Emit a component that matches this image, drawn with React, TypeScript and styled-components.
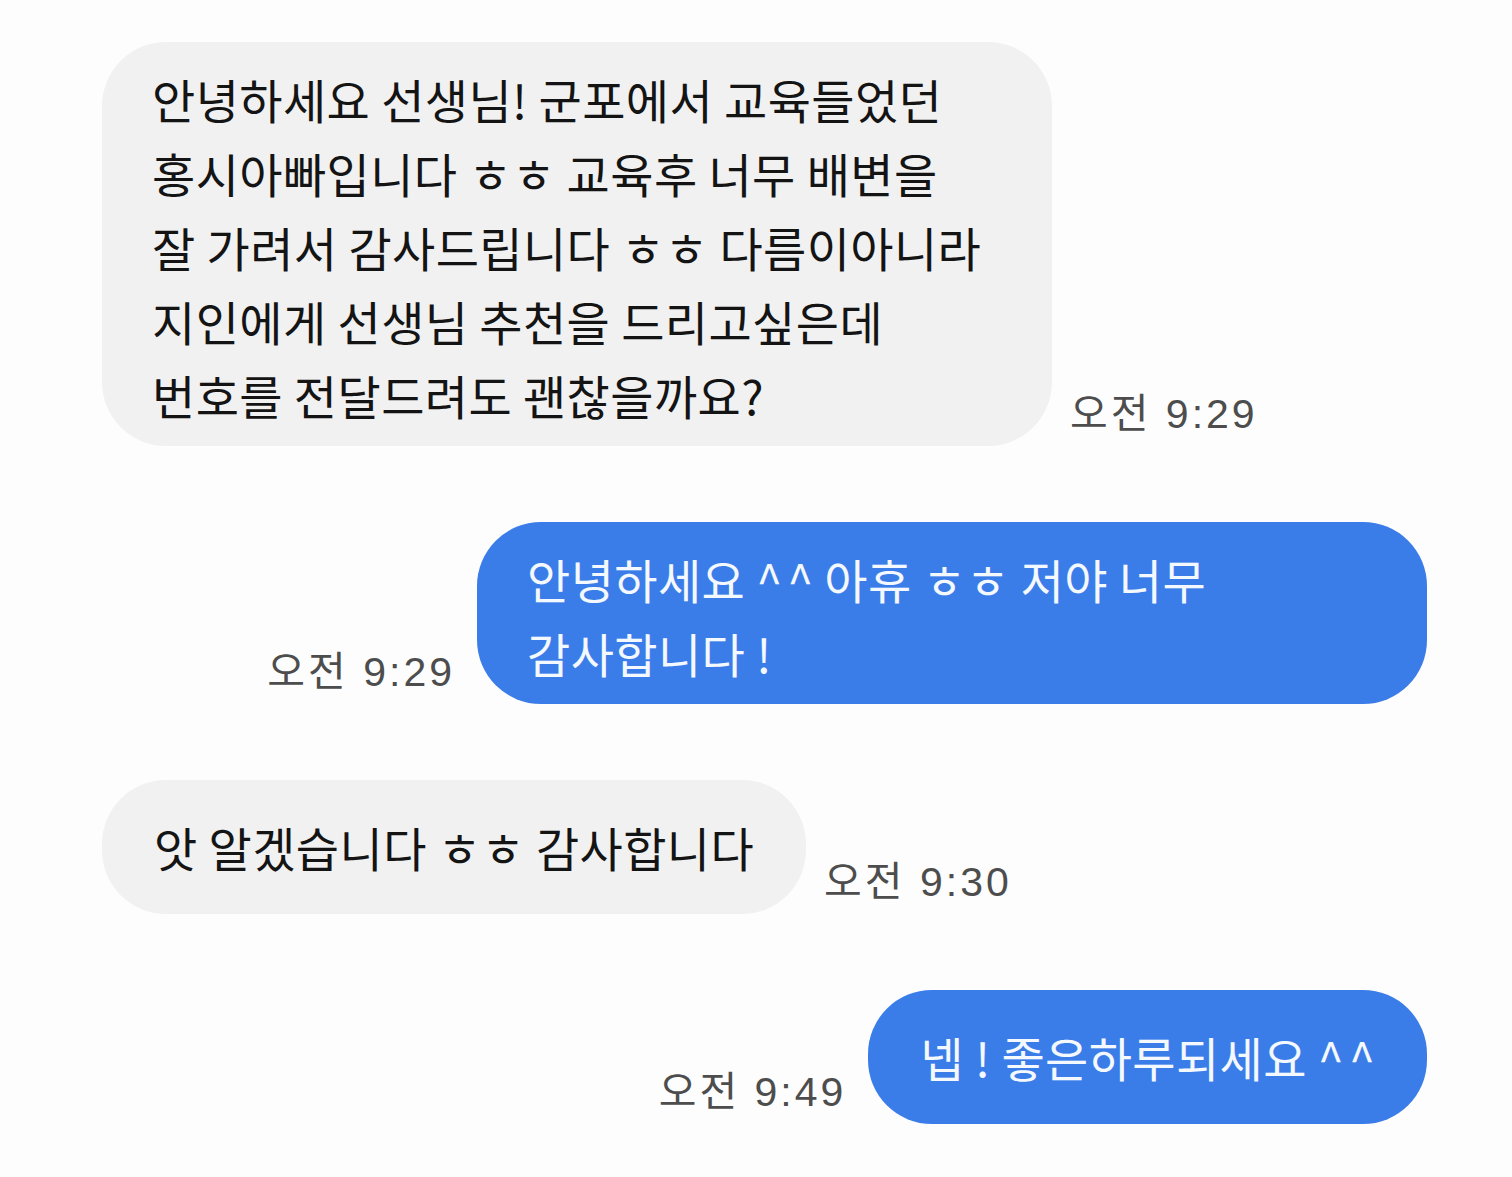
import { createGlobalStyle } from "styled-components";
import styled from "styled-components";

const GlobalStyle = createGlobalStyle`
  html, body {
    margin: 0;
    padding: 0;
    background: #fdfdfd;
  }
  body {
    font-family: "Noto Sans CJK KR", "Noto Sans", sans-serif;
  }
`;

const Page = styled.div`
  width: 1512px;
  height: 1177px;
  box-sizing: border-box;
  padding: 42px 85px 0 102px;
  display: flex;
  flex-direction: column;
  gap: 76px;
  background: #fdfdfd;
  overflow: hidden;
`;

const Row = styled.div<{ $out?: boolean }>`
  display: flex;
  align-items: flex-end;
  justify-content: ${(p) => (p.$out ? "flex-end" : "flex-start")};
`;

const Bubble = styled.div<{ $out?: boolean; $wide?: boolean; $single?: boolean }>`
  box-sizing: border-box;
  width: ${(p) => (p.$wide ? "950px" : "auto")};
  min-height: 134px;
  padding: ${(p) => (p.$single ? "0 52px 0 52px" : "20px 50px 14px 50px")};
  display: flex;
  align-items: center;
  border-radius: 64px;
  background: ${(p) => (p.$out ? "#3b7de8" : "#f1f1f1")};
  color: ${(p) => (p.$out ? "#f4f8ff" : "#141414")};
  font-size: 47px;
  line-height: 74px;
  letter-spacing: 0.4px;
  white-space: nowrap;
`;

const Carets = styled.span`
  letter-spacing: 5px;
  margin-right: -5px;
`;

const Time = styled.span<{ $out?: boolean }>`
  font-family: "Liberation Sans", "Noto Sans CJK KR", sans-serif;
  font-size: 41px;
  line-height: 40px;
  letter-spacing: 3px;
  color: #4d4d4d;
  margin: 0 ${(p) => (p.$out ? "22px" : "0")} 12px ${(p) => (p.$out ? "0" : "18px")};
  white-space: nowrap;
`;

const App = () => {
  return (
    <>
      <GlobalStyle />
      <Page>
        <Row>
          <Bubble $wide>
            <div>
              안녕하세요 선생님! 군포에서 교육들었던
              <br />
              홍시아빠입니다 ㅎㅎ 교육후 너무 배변을
              <br />
              잘 가려서 감사드립니다 ㅎㅎ 다름이아니라
              <br />
              지인에게 선생님 추천을 드리고싶은데
              <br />
              번호를 전달드려도 괜찮을까요?
            </div>
          </Bubble>
          <Time>오전 9:29</Time>
        </Row>

        <Row $out>
          <Time $out>오전 9:29</Time>
          <Bubble $out $wide>
            <div>
              안녕하세요 <Carets>^^</Carets> 아휴 ㅎㅎ 저야 너무
              <br />
              감사합니다 !
            </div>
          </Bubble>
        </Row>

        <Row>
          <Bubble $single>앗 알겠습니다 ㅎㅎ 감사합니다</Bubble>
          <Time>오전 9:30</Time>
        </Row>

        <Row $out>
          <Time $out>오전 9:49</Time>
          <Bubble $out $single>
            <span>
              넵 ! 좋은하루되세요 <Carets>^^</Carets>
            </span>
          </Bubble>
        </Row>
      </Page>
    </>
  );
};

export default App;
